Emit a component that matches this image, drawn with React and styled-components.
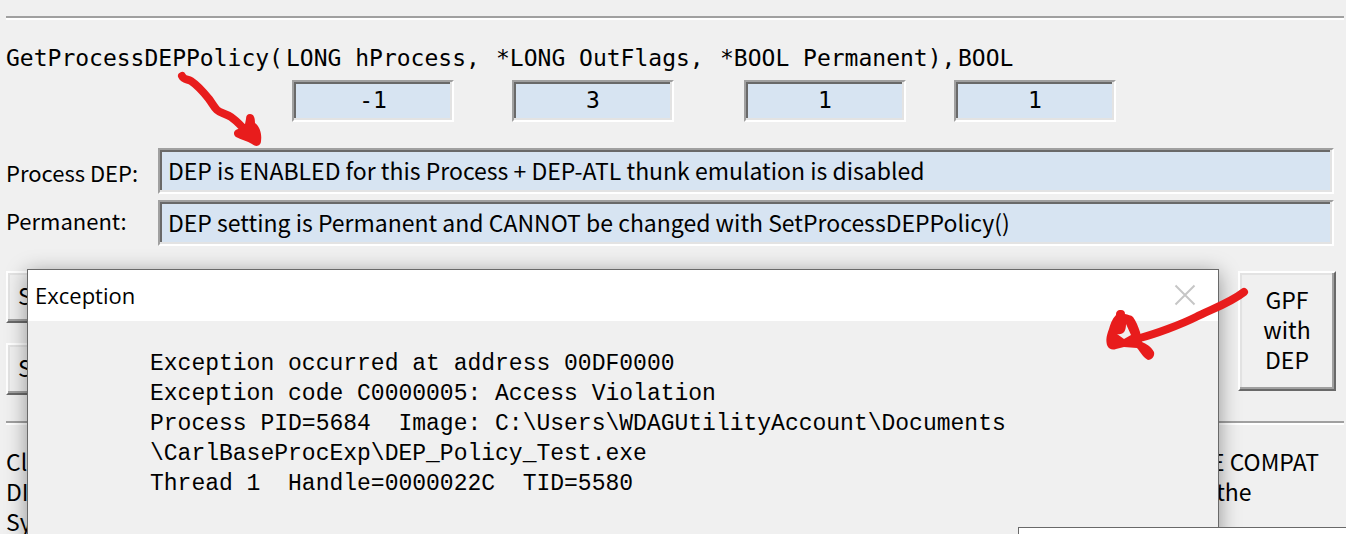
import { useState } from "react";
import styled, { createGlobalStyle } from "styled-components";

const PARAMS = [
    { id: "process", text: "LONG hProcess,", value: "-1", indent: 6 },
    { id: "flags", text: "*LONG OutFlags,", value: "3", indent: 16 },
    { id: "permanent", text: "*BOOL Permanent),", value: "1", indent: 24 },
    { id: "result", text: "BOOL", value: "1", indent: 0, labelIndent: 4 },
];

const STATUS = [
    { id: "dep", label: "Process DEP:", value: "DEP is ENABLED for this Process + DEP-ATL thunk emulation is disabled" },
    { id: "perm", label: "Permanent:", value: "DEP setting is Permanent and CANNOT be changed with SetProcessDEPPolicy()" },
];

const MESSAGE = [
    "Exception occurred at address 00DF0000",
    "Exception code C0000005: Access Violation",
    "Process PID=5684  Image: C:\\Users\\WDAGUtilityAccount\\Documents",
    "\\CarlBaseProcExp\\DEP_Policy_Test.exe",
    "Thread 1  Handle=0000022C  TID=5580",
].join("\n");

function App(){

    const [open, setOpen] = useState(true);

    return(
        <Page>
            <GlobalStyle />
            <Divider />
            <Signature>
                <Code>GetProcessDEPPolicy(</Code>
                { PARAMS.map(p => (
                    <Param key={ p.id }>
                        <Code as="label" htmlFor={ p.id } $indent={ p.labelIndent }>{ p.text }</Code>
                        <ValueField id={ p.id } $indent={ p.indent } defaultValue={ p.value } readOnly />
                    </Param>
                )) }
            </Signature>
            <Status>
                <StatusLabels>
                    { STATUS.map(s => <label key={ s.id } htmlFor={ s.id }>{ s.label }</label>) }
                </StatusLabels>
                <StatusFields>
                    { STATUS.map(s => <StatusField key={ s.id } id={ s.id } defaultValue={ s.value } readOnly />) }
                </StatusFields>
            </Status>
            <Actions>
                <ButtonStack>
                    <WideButton type="button">S</WideButton>
                    <WideButton type="button">S</WideButton>
                </ButtonStack>
                <GpfButton type="button" onClick={ ()=>setOpen(true) }>GPF<br />with<br />DEP</GpfButton>
            </Actions>
            <Divider />
            <Notes>
                <p>Cl<br />DI<br />Sy</p>
                <p>E COMPAT<br />&nbsp;the</p>
            </Notes>

            { open && (
                <Dialog role="dialog" aria-labelledby="dialog-title">
                    <TitleBar>
                        <Title id="dialog-title">Exception</Title>
                        <CloseButton type="button" aria-label="Close" onClick={ ()=>setOpen(false) }>
                            <svg width="22" height="22" viewBox="0 0 22 22" fill="none" stroke="#c6c6c6" strokeWidth="2">
                                <path d="M1.5 1.5 20.5 20.5M20.5 1.5 1.5 20.5" />
                            </svg>
                        </CloseButton>
                    </TitleBar>
                    <Message>{ MESSAGE }</Message>
                </Dialog>
            ) }
            <CornerWindow />

            <LeftMark width="100" height="90" viewBox="170 64 100 90">
                <path d="M182 76C184 80 187 79 191 81C197 85 205 94 209 99C212 103 214 107 217 110C220 113 225 113 231 117C237 121 241 126 246 131" />
                <Head d="M250 114Q246 114 246 119L244 129L238 129C233 130 233 135 236 137C242 140 247 141 252 144C257 148 261 145 261 141C262 134 260 127 255 123C255 118 254 114 250 114Z" />
            </LeftMark>
            <RightMark width="150" height="80" viewBox="1102 284 150 80">
                <path d="M1244 292C1230 303 1212 309 1196 317C1180 325 1155 334 1140 338" />
                <Head d="M1121 310C1117 310 1116 312 1116 315C1112 319 1110 325 1109 329C1106 337 1106 340 1107 345C1109 350 1113 350 1116 349L1124 347L1137 348C1141 353 1144 358 1148 360C1152 360 1155 356 1154 352C1151 346 1146 344 1142 342L1140 332C1138 326 1136 321 1133 317C1131 315 1128 315 1125 314Q1125 310 1121 310ZM1126 324L1131 335L1124 339L1117 334C1123 335 1126 332 1126 324Z" />
            </RightMark>
        </Page>
    );
};

const GlobalStyle = createGlobalStyle`
    *{
        box-sizing: border-box;
    }

    body{
        margin: 0;
        background-color: #f0f0f0;
    }

    p{
        margin: 0;
    }

    input, button{
        font: inherit;
        color: inherit;
    }
`;

const Page = styled.main`
    position: relative;
    height: 100vh;
    overflow: hidden;
    padding: 16px 2px 0px 6px;
    color: #000000;
    font-family: "Noto Sans CJK SC", "Open Sans", sans-serif;
    font-size: 23px;
    line-height: 30px;
`;

const Divider = styled.hr`
    height: 4px;
    margin: 0;
    border: none;
    border-top: 2px solid #a0a0a0;
    border-bottom: 2px solid #ffffff;
`;

const Signature = styled.div`
    display: grid;
    grid-template-columns: 280px 210px 224px 234px auto;
    margin-top: 23px;
    font-family: "DejaVu Sans Mono", monospace;
`;

const Param = styled.div`
    display: flex;
    flex-direction: column;
    gap: 7px;
`;

const Code = styled.span`
    padding-left: ${({ $indent })=> $indent || 0 }px;
    white-space: nowrap;
`;

const SunkenField = styled.input`
    min-width: 0;
    border: 2px solid;
    border-color: #a0a0a0 #ffffff #ffffff #a0a0a0;
    border-radius: 0;
    outline: none;
    background-color: #d7e4f2;
    box-shadow: inset -2px -2px #e3e3e3, inset 2px 2px #696969;
`;

const ValueField = styled(SunkenField)`
    width: 162px;
    height: 42px;
    margin-left: ${({ $indent })=> $indent }px;
    padding: 0px 4px 2px;
    text-align: center;
`;

const Status = styled.div`
    display: grid;
    grid-template-columns: 152px 1fr;
    margin-top: 26px;
    padding-right: 10px;
`;

const StatusLabels = styled.div`
    display: flex;
    flex-direction: column;
    gap: 18px;
    padding-top: 9px;
    font-size: 22px;
`;

const StatusFields = styled.div`
    display: flex;
    flex-direction: column;
    gap: 6px;
`;

const StatusField = styled(SunkenField)`
    height: 46px;
    padding: 0px 8px 2px;
`;

const Actions = styled.div`
    display: flex;
    justify-content: space-between;
    gap: 24px;
    margin: 25px 8px 26px 0px;
`;

const ButtonStack = styled.div`
    flex: 1;
    display: flex;
    flex-direction: column;
    gap: 20px;
`;

const RaisedButton = styled.button`
    border: 2px solid;
    border-color: #ffffff #696969 #696969 #ffffff;
    border-radius: 0;
    background-color: #f0f0f0;
    box-shadow: inset -2px -2px #a0a0a0, inset 2px 2px #e3e3e3;
    cursor: pointer;
`;

const WideButton = styled(RaisedButton)`
    height: 52px;
    padding: 0px 10px 4px;
    text-align: left;
`;

const GpfButton = styled(RaisedButton)`
    width: 98px;
    height: 120px;
    padding: 0px 0px 4px;
`;

const Notes = styled.div`
    display: flex;
    justify-content: space-between;
    margin-top: 21px;
    padding-right: 25px;
`;

const Dialog = styled.section`
    position: absolute;
    top: 269px;
    right: 127px;
    bottom: -60px;
    left: 27px;
    border: 1px solid #696969;
    background-color: #f0f0f0;
    box-shadow: 0px 4px 20px rgba(0, 0, 0, 0.4);
`;

const TitleBar = styled.header`
    height: 51px;
    padding: 0px 22px 2px 7px;
    display: flex;
    justify-content: space-between;
    align-items: center;
    background-color: #ffffff;
`;

const Title = styled.h1`
    margin: 0;
    font-family: "Open Sans", sans-serif;
    font-size: 22px;
    font-weight: 400;
`;

const CloseButton = styled.button`
    padding: 0;
    display: flex;
    border: none;
    background: none;
    cursor: pointer;
`;

const Message = styled.pre`
    margin: 0;
    padding: 28px 0px 0px 122px;
    font-family: "Liberation Mono", monospace;
`;

const CornerWindow = styled.div`
    position: absolute;
    right: 0px;
    bottom: 0px;
    width: 328px;
    height: 7px;
    border-top: 1px solid #696969;
    border-left: 1px solid #696969;
    background-color: #ffffff;
`;

/* hand drawn arrows lying over the windows */
const Mark = styled.svg`
    position: absolute;
    pointer-events: none;
    fill: none;
    stroke: #e81c1c;
    stroke-width: 8px;
    stroke-linecap: round;
    stroke-linejoin: round;
`;

const Head = styled.path`
    fill: #e81c1c;
    fill-rule: evenodd;
    stroke: none;
`;

const LeftMark = styled(Mark)`
    top: 64px;
    left: 170px;
`;

const RightMark = styled(Mark)`
    top: 284px;
    right: 94px;
`;

export default App;
